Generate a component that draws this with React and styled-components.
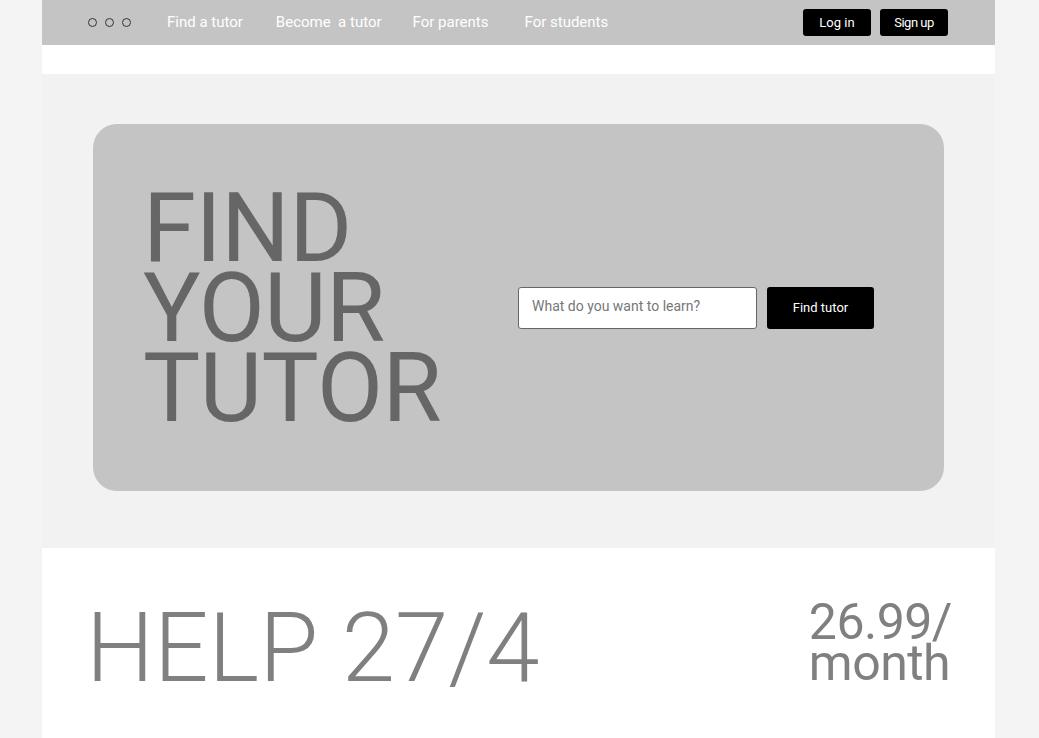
import styled, { createGlobalStyle } from "styled-components";

const GlobalStyle = createGlobalStyle`
  html, body {
    margin: 0;
    padding: 0;
    background-color: #f4f4f4;
    font-family: Roboto, "Liberation Sans", sans-serif;
  }
`;

const Page = styled.div`
  width: 953px;
  margin-left: 42px;
  display: flex;
  flex-direction: column;
`;

const Header = styled.header`
  height: 45px;
  background-color: #c4c4c4;
  display: flex;
  align-items: center;
  padding: 0 47px 0 46px;
`;

const Dots = styled.div`
  display: flex;
  gap: 8px;
  margin-right: 36px;
`;

const Dot = styled.span`
  width: 7px;
  height: 7px;
  border: 1.2px solid #333;
  border-radius: 50%;
`;

const Nav = styled.nav`
  display: flex;
  align-items: center;
  flex: 1;
  margin-top: -2px;
`;

const NavLink = styled.a`
  color: #fff;
  font-size: 15px;
  text-decoration: none;
  white-space: pre;
  margin-right: ${(p) => p.gap}px;
`;

const AuthButtons = styled.div`
  display: flex;
  gap: 9px;
`;

const SmallButton = styled.button`
  width: 68px;
  height: 27px;
  background: #000;
  color: #fff;
  border: none;
  border-radius: 3px;
  font-family: inherit;
  font-size: 13px;
  letter-spacing: ${(p) => (p.tight ? "-0.5px" : "0")};
`;

const Spacer = styled.div`
  height: 29px;
  background: #fff;
`;

const HeroSection = styled.section`
  background: #f2f2f2;
  padding: 50px 51px 57px;
`;

const HeroCard = styled.div`
  height: 367px;
  background: #c4c4c4;
  border-radius: 24px;
  display: flex;
  align-items: center;
  padding-left: 50px;
`;

const Title = styled.h1`
  margin: 0;
  font-size: 96px;
  font-weight: 400;
  line-height: 80px;
  color: #666;
  width: 375px;
  letter-spacing: -0.5px;
`;

const SearchRow = styled.div`
  display: flex;
  gap: 10px;
`;

const SearchInput = styled.input`
  width: 239px;
  height: 42px;
  box-sizing: border-box;
  border: 1px solid #666;
  border-radius: 3px;
  padding: 0 13px 4px;
  font-family: inherit;
  font-size: 14px;
  color: #333;
  background: #fff;
  &::placeholder {
    color: #777;
  }
`;

const FindButton = styled.button`
  width: 107px;
  height: 42px;
  background: #000;
  color: #fff;
  border: none;
  border-radius: 3px;
  font-family: inherit;
  font-size: 13px;
`;

const HelpSection = styled.section`
  background: #fff;
  height: 190px;
  display: flex;
  align-items: center;
  justify-content: space-between;
  padding: 0 43px 0 44px;
`;

const HelpText = styled.div`
  font-size: 96px;
  font-weight: 300;
  color: #808080;
  line-height: 1;
  margin-top: 10px;
`;

const Price = styled.div`
  font-size: 50px;
  font-weight: 400;
  color: #808080;
  line-height: 41px;
  letter-spacing: -0.5px;
  margin-top: 0;
`;

export default function App() {
  return (
    <>
      <GlobalStyle />
      <Page>
        <Header>
          <Dots>
            <Dot />
            <Dot />
            <Dot />
          </Dots>
          <Nav>
            <NavLink gap={33}>Find a tutor</NavLink>
            <NavLink gap={31}>Become  a tutor</NavLink>
            <NavLink gap={36}>For parents</NavLink>
            <NavLink gap={0}>For students</NavLink>
          </Nav>
          <AuthButtons>
            <SmallButton>Log in</SmallButton>
            <SmallButton tight>Sign up</SmallButton>
          </AuthButtons>
        </Header>
        <Spacer />
        <HeroSection>
          <HeroCard>
            <Title>FIND YOUR TUTOR</Title>
            <SearchRow>
              <SearchInput placeholder="What do you want to learn?" />
              <FindButton>Find tutor</FindButton>
            </SearchRow>
          </HeroCard>
        </HeroSection>
        <HelpSection>
          <HelpText>HELP 27/4</HelpText>
          <Price>
            26.99/
            <br />
            month
          </Price>
        </HelpSection>
      </Page>
    </>
  );
}
